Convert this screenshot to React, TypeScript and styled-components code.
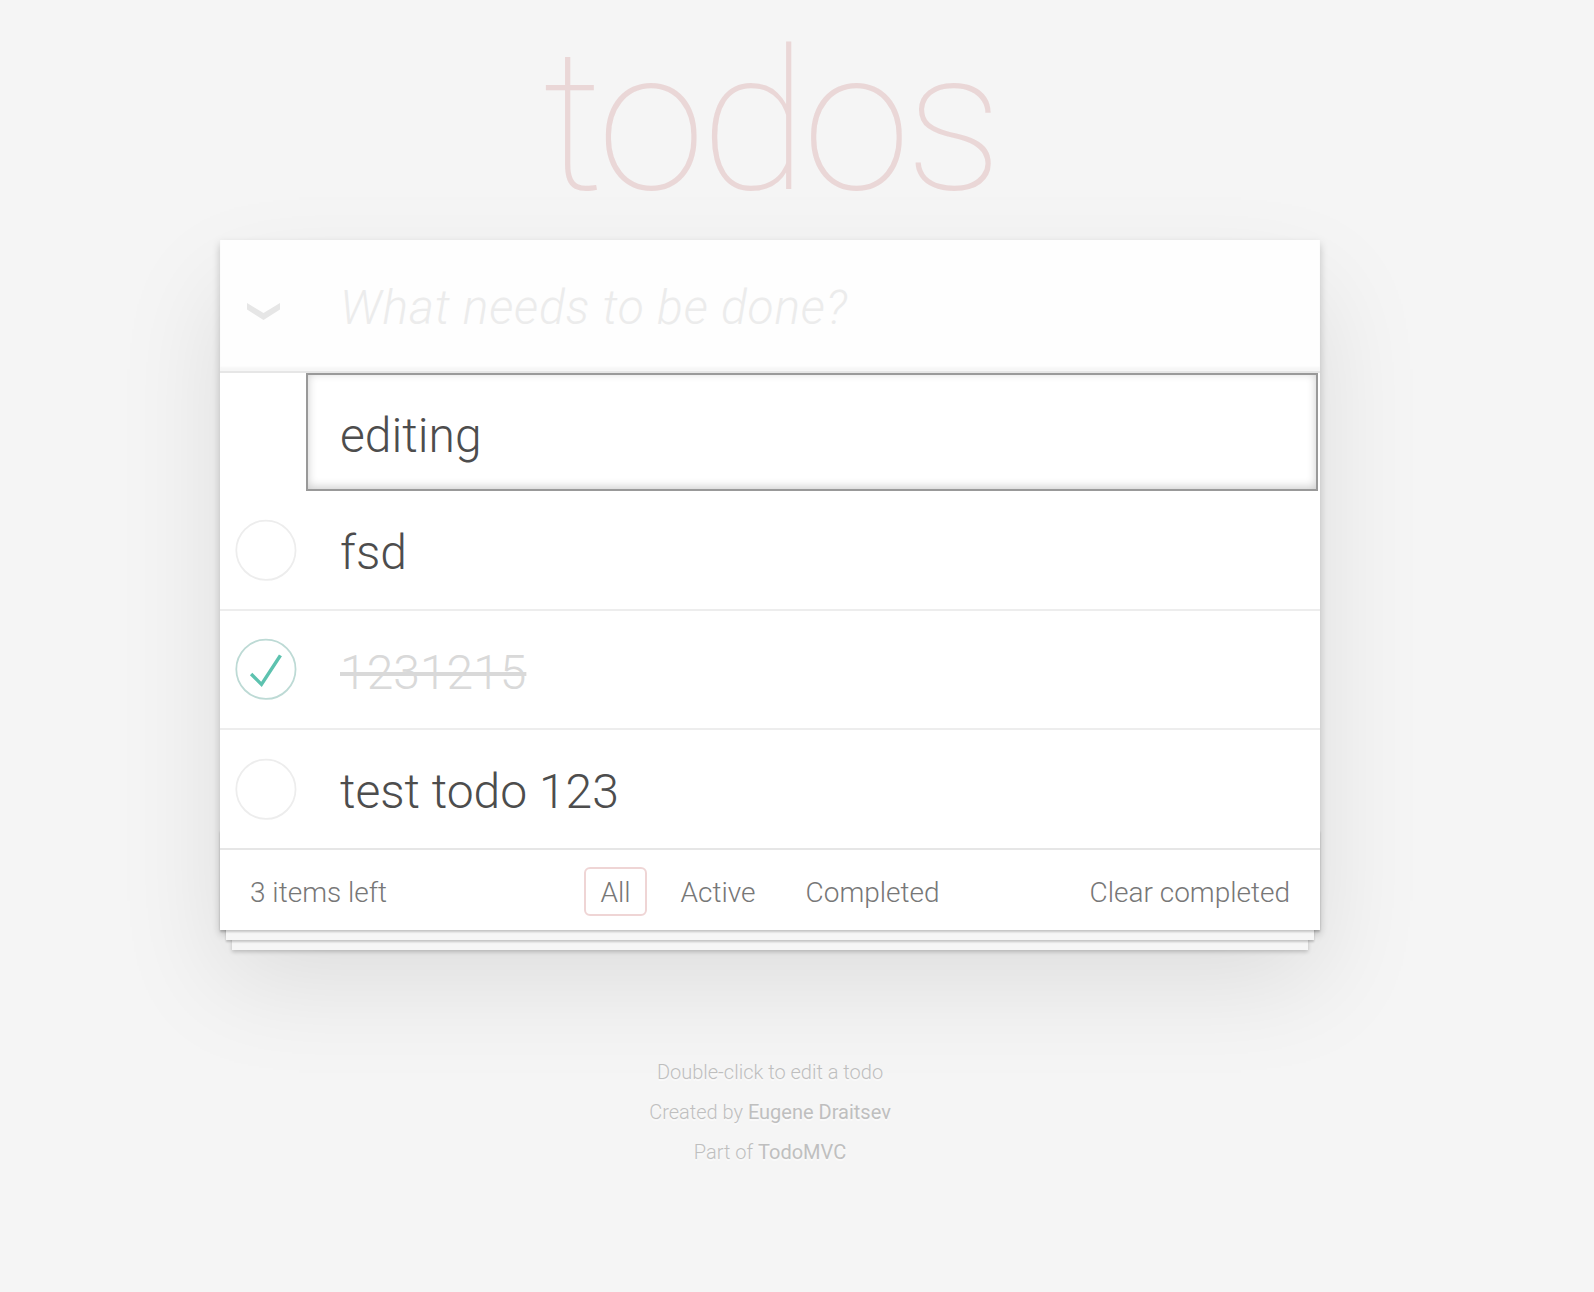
import React from "react";
import styled, { createGlobalStyle } from "styled-components";

const GlobalStyle = createGlobalStyle`
  html, body { margin: 0; padding: 0; }
  body {
    background: #f5f5f5;
    font-family: Roboto, "Helvetica Neue", Helvetica, Arial, sans-serif;
    font-weight: 300;
    color: #4d4d4d;
    -webkit-font-smoothing: antialiased;
  }
  * { box-sizing: border-box; }
`;

const Page = styled.div`
  width: 1100px;
  margin-left: 220px;
  padding-top: 22px;
`;

const Title = styled.h1`
  margin: 0 0 18px;
  height: 200px;
  font-size: 196px;
  line-height: 200px;
  font-weight: 100;
  text-align: center;
  color: rgba(175, 47, 47, 0.15);
  letter-spacing: -5px;
`;

const App = styled.section`
  position: relative;
  background: #fff;
  box-shadow: 0 4px 8px 0 rgba(0, 0, 0, 0.2), 0 50px 100px 0 rgba(0, 0, 0, 0.1);
`;

const Header = styled.header`
  display: flex;
  align-items: stretch;
  height: 131px;
  background: rgba(0, 0, 0, 0.003);
  box-shadow: inset 0 -4px 2px rgba(0, 0, 0, 0.03);
`;

const ToggleAll = styled.label`
  width: 87px;
  display: flex;
  align-items: center;
  justify-content: center;
  padding-top: 11px;
`;

const NewTodo = styled.input`
  flex: 1;
  border: none;
  outline: none;
  margin: 0;
  padding: 4px 32px 0 33px;
  font-family: inherit;
  font-size: 48px;
  font-weight: 300;
  color: #4d4d4d;
  background: transparent;
  letter-spacing: 0.8px;
  &::placeholder {
    font-style: italic;
    font-weight: 300;
    color: #ececec;
  }
`;

const Main = styled.section`
  border-top: 2px solid #e6e6e6;
`;

const List = styled.ul`
  margin: 0;
  padding: 0;
  list-style: none;
`;

const EditRow = styled.li`
  padding: 0;
`;

const EditInput = styled.input`
  display: block;
  width: 1012px;
  margin: 0 0 0 86px;
  padding: 27px 32px 21px;
  height: 118px;
  border: 2px solid #999;
  outline: none;
  box-shadow: inset 0 -2px 10px 0 rgba(0, 0, 0, 0.2);
  font-family: inherit;
  font-size: 48px;
  line-height: 66px;
  font-weight: 300;
  color: #4d4d4d;
  background: #fff;
`;

const Row = styled.li<{ $last?: boolean }>`
  display: flex;
  align-items: center;
  border-bottom: ${(p) => (p.$last ? "none" : "2px solid #ededed")};
`;

const Toggle = styled.span`
  width: 80px;
  height: 80px;
  flex: none;
  display: flex;
`;

const Label = styled.label<{ $done?: boolean }>`
  flex: 1;
  padding: 33px 30px 27px 40px;
  font-size: 48px;
  line-height: 57.6px;
  font-weight: 300;
  color: ${(p) => (p.$done ? "#d9d9d9" : "#4d4d4d")};
  text-decoration: ${(p) => (p.$done ? "line-through" : "none")};
  word-break: break-all;
`;

const Footer = styled.footer`
  position: relative;
  display: grid;
  grid-template-columns: 1fr auto 1fr;
  align-items: center;
  height: 82px;
  padding: 4px 30px 0;
  border-top: 2px solid #e6e6e6;
  color: #777;
  font-size: 28px;
  &::before {
    content: "";
    position: absolute;
    right: 0;
    bottom: 0;
    left: 0;
    height: 100px;
    overflow: hidden;
    box-shadow: 0 2px 2px rgba(0, 0, 0, 0.2), 0 16px 0 -6px #f6f6f6,
      0 18px 2px -6px rgba(0, 0, 0, 0.2), 0 32px 0 -12px #f6f6f6,
      0 34px 4px -12px rgba(0, 0, 0, 0.2);
    pointer-events: none;
  }
`;

const Count = styled.span`
  justify-self: start;
  padding-top: 2px;
`;

const Filters = styled.ul`
  display: flex;
  gap: 6px;
  margin: 0;
  padding: 0;
  list-style: none;
`;

const FilterLink = styled.a<{ $selected?: boolean }>`
  display: inline-block;
  margin: 6px;
  padding: 7px 14px 5px;
  line-height: 33px;
  color: inherit;
  text-decoration: none;
  border: 2px solid ${(p) => (p.$selected ? "rgba(175, 47, 47, 0.2)" : "transparent")};
  border-radius: 6px;
`;

const ClearButton = styled.button`
  justify-self: end;
  margin: 0;
  padding: 2px 0 0;
  border: none;
  background: none;
  font-family: inherit;
  font-size: 28px;
  font-weight: 300;
  color: #777;
  cursor: pointer;
`;

const Info = styled.footer`
  margin-top: 132px;
  color: #bfbfbf;
  font-size: 20px;
  text-align: center;
  text-shadow: 0 2px 0 rgba(255, 255, 255, 0.5);
  p {
    margin: 20px 0;
    line-height: 1;
  }
  a {
    color: inherit;
    text-decoration: none;
    font-weight: 400;
  }
`;

const Chevron = () => (
  <svg width="33" height="17" viewBox="0 0 33 17">
    <polygon points="0,0 16.5,10 33,0 33,6.5 16.5,17 0,6.5" fill="#e6e6e6" />
  </svg>
);

const Check = ({ done }: { done?: boolean }) => (
  <svg width="80" height="80" viewBox="-10 -18 100 135">
    <circle
      cx="50"
      cy="50"
      r="50"
      fill="none"
      stroke={done ? "#bddad5" : "#ededed"}
      strokeWidth="3"
    />
    {done && <path fill="#5dc2af" d="M72 25L42 71 27 56l-4 4 20 20 34-52z" />}
  </svg>
);

const todos = [
  { text: "fsd", done: false },
  { text: "1231215", done: true },
  { text: "test todo 123", done: false },
];

export default function TodoApp() {
  return (
    <>
      <GlobalStyle />
      <Page>
        <Title>todos</Title>
        <App>
          <Header>
            <ToggleAll>
              <Chevron />
            </ToggleAll>
            <NewTodo placeholder="What needs to be done?" />
          </Header>
          <Main>
            <List>
              <EditRow>
                <EditInput defaultValue="editing" />
              </EditRow>
              {todos.map((t, i) => (
                <Row key={t.text} $last={i === todos.length - 1}>
                  <Toggle>
                    <Check done={t.done} />
                  </Toggle>
                  <Label $done={t.done}>{t.text}</Label>
                </Row>
              ))}
            </List>
          </Main>
          <Footer>
            <Count>3 items left</Count>
            <Filters>
              <li>
                <FilterLink href="#/" $selected>
                  All
                </FilterLink>
              </li>
              <li>
                <FilterLink href="#/active">Active</FilterLink>
              </li>
              <li>
                <FilterLink href="#/completed">Completed</FilterLink>
              </li>
            </Filters>
            <ClearButton>Clear completed</ClearButton>
          </Footer>
        </App>
        <Info>
          <p>Double-click to edit a todo</p>
          <p>
            Created by <a href="#">Eugene Draitsev</a>
          </p>
          <p>
            Part of <a href="#">TodoMVC</a>
          </p>
        </Info>
      </Page>
    </>
  );
}
